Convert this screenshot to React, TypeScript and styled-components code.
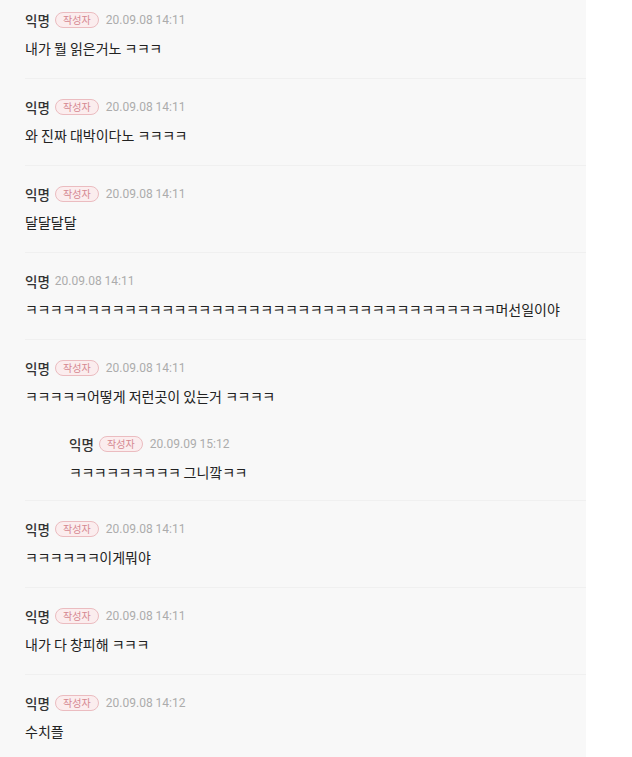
import React from "react";
import styled, { createGlobalStyle } from "styled-components";

type Reply = { author: string; isWriter: boolean; date: string; text: string };
type CommentData = Reply & { replies?: Reply[] };

const comments: CommentData[] = [
  { author: "익명", isWriter: true, date: "20.09.08 14:11", text: "내가 뭘 읽은거노 ㅋㅋㅋ" },
  { author: "익명", isWriter: true, date: "20.09.08 14:11", text: "와 진짜 대박이다노 ㅋㅋㅋㅋ" },
  { author: "익명", isWriter: true, date: "20.09.08 14:11", text: "달달달달" },
  {
    author: "익명",
    isWriter: false,
    date: "20.09.08 14:11",
    text: "ㅋ".repeat(38) + "머선일이야",
  },
  {
    author: "익명",
    isWriter: true,
    date: "20.09.08 14:11",
    text: "ㅋㅋㅋㅋㅋ어떻게 저런곳이 있는거 ㅋㅋㅋㅋ",
    replies: [
      { author: "익명", isWriter: true, date: "20.09.09 15:12", text: "ㅋㅋㅋㅋㅋㅋㅋㅋㅋ 그니깤ㅋㅋ" },
    ],
  },
  { author: "익명", isWriter: true, date: "20.09.08 14:11", text: "ㅋㅋㅋㅋㅋㅋ이게뭐야" },
  { author: "익명", isWriter: true, date: "20.09.08 14:11", text: "내가 다 창피해 ㅋㅋㅋ" },
  { author: "익명", isWriter: true, date: "20.09.08 14:12", text: "수치플" },
];

const GlobalStyle = createGlobalStyle`
  html, body {
    margin: 0;
    padding: 0;
    background: #ffffff;
  }
  body {
    font-family: "Noto Sans CJK KR", "Noto Sans", sans-serif;
  }
`;

const Panel = styled.div`
  width: 586px;
  height: 757px;
  overflow: hidden;
  background: #f8f8f8;
`;

const Item = styled.div`
  margin-left: 25px;
  padding: 18px 0 20px;
  border-bottom: 1px solid #f0f0f0;
  &:first-child {
    padding-top: 10px;
  }
`;

const ReplyBox = styled.div`
  margin-top: 28px;
  margin-left: 44px;
  margin-bottom: -2px;
`;

const Meta = styled.div`
  display: flex;
  align-items: center;
  height: 20px;
`;

const Author = styled.span`
  font-size: 13.5px;
  font-weight: 500;
  color: #333333;
  margin-right: 5px;
`;

const WriterBadge = styled.span`
  display: inline-flex;
  align-items: center;
  justify-content: center;
  box-sizing: border-box;
  width: 44px;
  height: 16px;
  margin-right: 7px;
  border: 1px solid #ebbcc0;
  border-radius: 8px;
  background: #fbedee;
  color: #d58891;
  font-size: 10px;
  line-height: 1;
`;

const DateText = styled.span`
  font-family: Roboto, "Noto Sans", sans-serif;
  font-size: 12px;
  color: #acacac;
`;

const Body = styled.div`
  margin-top: 8px;
  font-size: 14px;
  line-height: 20px;
  color: #222222;
  white-space: nowrap;
`;

const Laugh = styled.span`
  letter-spacing: -0.5px;
`;

function renderText(text: string) {
  return text.split(/(ㅋ+)/).map((part, i) =>
    part.startsWith("ㅋ") ? <Laugh key={i}>{part}</Laugh> : <React.Fragment key={i}>{part}</React.Fragment>
  );
}

const Entry: React.FC<{ data: Reply }> = ({ data }) => (
  <>
    <Meta>
      <Author>{data.author}</Author>
      {data.isWriter && <WriterBadge>작성자</WriterBadge>}
      <DateText>{data.date}</DateText>
    </Meta>
    <Body>{renderText(data.text)}</Body>
  </>
);

export default function App() {
  return (
    <>
      <GlobalStyle />
      <Panel>
        {comments.map((c, i) => (
          <Item key={i}>
            <Entry data={c} />
            {c.replies?.map((r, j) => (
              <ReplyBox key={j}>
                <Entry data={r} />
              </ReplyBox>
            ))}
          </Item>
        ))}
      </Panel>
    </>
  );
}
